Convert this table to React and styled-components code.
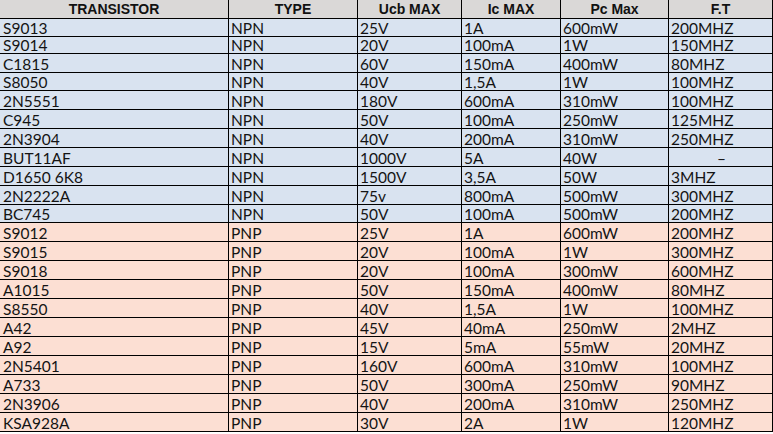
import React from 'react'
import styled, { createGlobalStyle } from 'styled-components'

const GlobalStyle = createGlobalStyle`
  html, body {
    margin: 0;
    padding: 0;
    background: #ffffff;
  }
`

const npn = [
  ['S9013', 'NPN', '25V', '1A', '600mW', '200MHZ'],
  ['S9014', 'NPN', '20V', '100mA', '1W', '150MHZ'],
  ['C1815', 'NPN', '60V', '150mA', '400mW', '80MHZ'],
  ['S8050', 'NPN', '40V', '1,5A', '1W', '100MHZ'],
  ['2N5551', 'NPN', '180V', '600mA', '310mW', '100MHZ'],
  ['C945', 'NPN', '50V', '100mA', '250mW', '125MHZ'],
  ['2N3904', 'NPN', '40V', '200mA', '310mW', '250MHZ'],
  ['BUT11AF', 'NPN', '1000V', '5A', '40W', '–'],
  ['D1650 6K8', 'NPN', '1500V', '3,5A', '50W', '3MHZ'],
  ['2N2222A', 'NPN', '75v', '800mA', '500mW', '300MHZ'],
  ['BC745', 'NPN', '50V', '100mA', '500mW', '200MHZ'],
]

const pnp = [
  ['S9012', 'PNP', '25V', '1A', '600mW', '200MHZ'],
  ['S9015', 'PNP', '20V', '100mA', '1W', '300MHZ'],
  ['S9018', 'PNP', '20V', '100mA', '300mW', '600MHZ'],
  ['A1015', 'PNP', '50V', '150mA', '400mW', '80MHZ'],
  ['S8550', 'PNP', '40V', '1,5A', '1W', '100MHZ'],
  ['A42', 'PNP', '45V', '40mA', '250mW', '2MHZ'],
  ['A92', 'PNP', '15V', '5mA', '55mW', '20MHZ'],
  ['2N5401', 'PNP', '160V', '600mA', '310mW', '100MHZ'],
  ['A733', 'PNP', '50V', '300mA', '250mW', '90MHZ'],
  ['2N3906', 'PNP', '40V', '200mA', '310mW', '250MHZ'],
  ['KSA928A', 'PNP', '30V', '2A', '1W', '120MHZ'],
]

const headers = ['TRANSISTOR', 'TYPE', 'Ucb MAX', 'Ic MAX', 'Pc Max', 'F.T']

// row heights in px, bottom border included
const heights = [18, 17, 19, 18, 19, 19, 19, 19, 19, 19, 18, 19, 19, 19, 19, 19, 19, 19, 19, 19, 19, 19]

const Sheet = styled.div`
  width: 773px;
  box-sizing: border-box;
  border-right: 1px solid #000;
`

const Row = styled.div`
  display: grid;
  grid-template-columns: 228px 129px 104px 99px 108px 104px;
  height: ${p => p.$h}px;
  box-sizing: border-box;
  border-bottom: 1px solid #000;
  background: ${p => (p.$kind === 'npn' ? '#d9e3f0' : p.$kind === 'pnp' ? '#fcdfd3' : '#dad8d7')};
`

const HeadCell = styled.div`
  box-sizing: border-box;
  border-left: ${p => (p.$first ? 'none' : '1px solid #000')};
  font-family: "Liberation Sans", Arial, sans-serif;
  font-weight: bold;
  font-size: 14px;
  color: #111;
  text-align: center;
  line-height: 18px;
`

const Cell = styled.div`
  box-sizing: border-box;
  border-left: ${p => (p.$first ? 'none' : '1px solid #000')};
  font-family: Lato, "Open Sans", sans-serif;
  font-size: 15.5px;
  color: #141414;
  padding-left: ${p => (p.$first ? 3 : 2)}px;
  display: flex;
  align-items: flex-end;
  justify-content: ${p => (p.$center ? 'center' : 'flex-start')};
  line-height: 16px;
  white-space: nowrap;
`

const rows = [
  ...npn.map(r => ({ kind: 'npn', cells: r })),
  ...pnp.map(r => ({ kind: 'pnp', cells: r })),
]

export default function App() {
  return (
    <>
      <GlobalStyle />
      <Sheet>
        <Row $kind="head" $h={19}>
          {headers.map((h, i) => (
            <HeadCell key={h} $first={i === 0}>{h}</HeadCell>
          ))}
        </Row>
        {rows.map((r, ri) => (
          <Row key={r.cells[0]} $kind={r.kind} $h={heights[ri]}>
            {r.cells.map((c, ci) => (
              <Cell key={ci} $first={ci === 0} $center={c === '–'}>{c}</Cell>
            ))}
          </Row>
        ))}
      </Sheet>
    </>
  )
}
